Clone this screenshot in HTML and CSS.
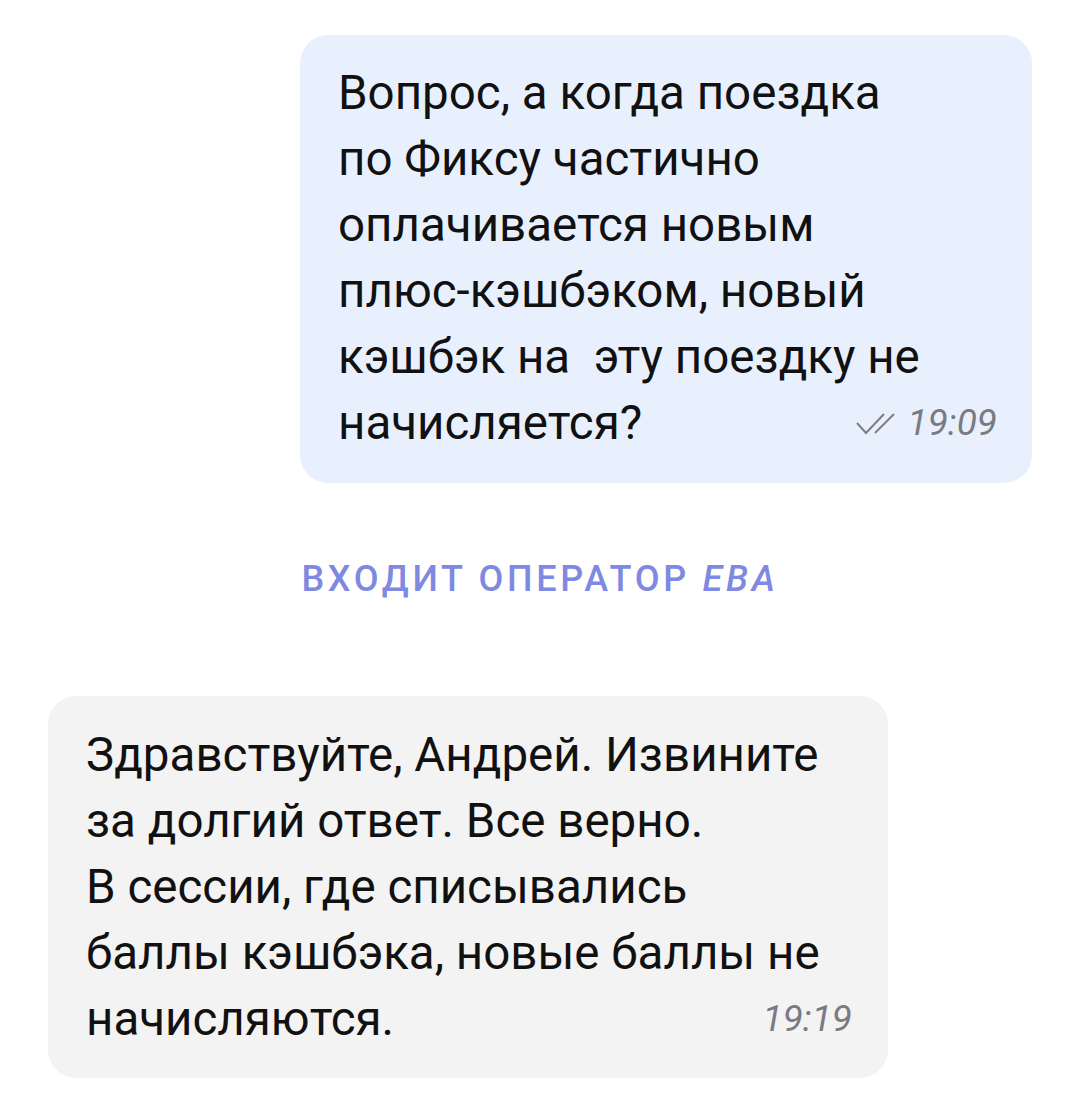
FILE: index.html
```
<!DOCTYPE html>
<html>
<head>
<meta charset="utf-8">
<title>Чат поддержки</title>
<link rel="stylesheet" href="styles.css">
</head>
<body>
<div class="chat">

  <div class="msg msg-out">
    <div class="msg-text">
      Вопрос, а когда поездка<br>
      по Фиксу частично<br>
      оплачивается новым<br>
      плюс-кэшбэком, новый<br>
      кэшбэк на&nbsp; эту поездку не
    </div>
    <div class="msg-last">
      <span>начисляется?</span>
      <span class="meta">
        <svg class="ticks" width="44" height="24" viewBox="0 0 44 24">
          <path d="M1 11 L10 21 L28 2" fill="none" stroke="#7d7d85" stroke-width="2"/>
          <path d="M19 21 L38 2" fill="none" stroke="#7d7d85" stroke-width="2"/>
        </svg>
        <span class="time">19:09</span>
      </span>
    </div>
  </div>

  <div class="system">ВХОДИТ ОПЕРАТОР <i>ЕВА</i></div>

  <div class="msg msg-in">
    <div class="msg-text">
      Здравствуйте, Андрей. Извините<br>
      за долгий ответ. Все верно.<br>
      В сессии, где списывались<br>
      баллы кэшбэка, новые баллы не
    </div>
    <div class="msg-last">
      <span>начисляются.</span>
      <span class="meta"><span class="time">19:19</span></span>
    </div>
  </div>

</div>
</body>
</html>
```

FILE: styles.css
```
body {
  margin: 0;
  background: #fff;
  font-family: Roboto, "Noto Sans", sans-serif;
  color: #111;
}

.chat {
  padding: 35px 48px 40px 48px;
  display: flex;
  flex-direction: column;
}

.msg {
  border-radius: 28px;
  font-size: 47.5px;
  line-height: 66px;
  box-sizing: border-box;
}

.msg-out {
  align-self: flex-end;
  width: 732px;
  background: #e8f0fd;
  padding: 25px 35px 27px 38px;
}

.msg-in {
  align-self: flex-start;
  width: 840px;
  background: #f3f3f3;
  padding: 26px 36px 26px 38px;
}

.msg-last {
  display: flex;
  justify-content: space-between;
  align-items: center;
}

.meta {
  display: flex;
  align-items: center;
  gap: 7px;
  color: #7a7a82;
}

.ticks {
  margin-top: 2px;
}

.time {
  font-size: 37px;
  font-style: italic;
}

.system {
  margin: 66px 0 87px;
  text-align: center;
  color: #7f89e1;
  font-size: 36px;
  line-height: 60px;
  letter-spacing: 3.7px;
  font-weight: 500;
}

.system i {
  font-style: italic;
}
```
